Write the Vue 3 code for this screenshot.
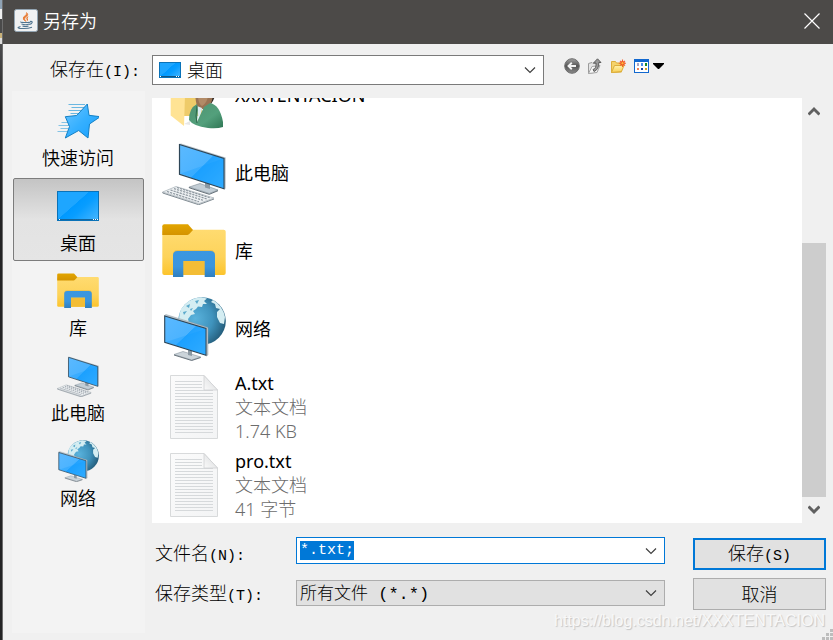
<script setup>
import { ref, onMounted } from 'vue'

const places = [
  { id: 'quick', label: '快速访问', icon: 'star' },
  { id: 'desktop', label: '桌面', icon: 'desktop' },
  { id: 'library', label: '库', icon: 'library' },
  { id: 'pc', label: '此电脑', icon: 'pc' },
  { id: 'network', label: '网络', icon: 'network' },
]
const activePlace = ref('desktop')

const entries = [
  { name: 'XXXTENTACION', icon: 'user' },
  { name: '此电脑', icon: 'pc' },
  { name: '库', icon: 'library' },
  { name: '网络', icon: 'network' },
  { name: 'A.txt', icon: 'doc', kind: '文本文档', size: '1.74 KB' },
  { name: 'pro.txt', icon: 'doc', kind: '文本文档', size: '41 字节' },
]

const docLines = [6, 9, 12, 15, 18, 21, 24, 27, 30, 33, 36, 39, 42, 45, 48, 51, 54, 57]

const fileName = ref('*.txt;')
const nameInput = ref(null)
const listEl = ref(null)

onMounted(() => {
  listEl.value.scrollTop = 42
  nameInput.value.focus()
  nameInput.value.select()
})
</script>

<template>
  <div class="screen">
    <svg class="defs" width="0" height="0" aria-hidden="true">
      <defs>
        <linearGradient id="gScreen" x1="0" y1="0" x2="1" y2="1">
          <stop offset="0" stop-color="#5bb9ff" /><stop offset="0.5" stop-color="#4bb3ff" />
          <stop offset="0.51" stop-color="#22a3ff" /><stop offset="1" stop-color="#3fb2ff" />
        </linearGradient>
        <linearGradient id="gDesk" x1="0" y1="0.1" x2="1" y2="0.9">
          <stop offset="0" stop-color="#1ea6ff" /><stop offset="0.42" stop-color="#1ea6ff" />
          <stop offset="0.43" stop-color="#0099ff" /><stop offset="0.6" stop-color="#089dff" /><stop offset="1" stop-color="#41b4ff" />
        </linearGradient>
        <linearGradient id="gFolder" x1="0" y1="0" x2="0" y2="1">
          <stop offset="0" stop-color="#ffdb70" /><stop offset="0.6" stop-color="#fdd35a" /><stop offset="1" stop-color="#fcc42c" />
        </linearGradient>
        <linearGradient id="gTab" x1="0" y1="0" x2="0" y2="1">
          <stop offset="0" stop-color="#e2a500" /><stop offset="1" stop-color="#d49300" />
        </linearGradient>
        <linearGradient id="gClip" x1="0" y1="0" x2="0" y2="1">
          <stop offset="0" stop-color="#3b97e0" /><stop offset="0.6" stop-color="#3a95de" /><stop offset="1" stop-color="#307fbe" />
        </linearGradient>
        <radialGradient id="gGlobe" cx="0.36" cy="0.45" r="0.66">
          <stop offset="0" stop-color="#5ab3dd" /><stop offset="0.55" stop-color="#3f93bd" /><stop offset="1" stop-color="#235b79" />
        </radialGradient>
        <linearGradient id="gStar" x1="0" y1="0" x2="1" y2="1">
          <stop offset="0" stop-color="#6cc5ff" /><stop offset="0.5" stop-color="#36b0ff" /><stop offset="1" stop-color="#159fff" />
        </linearGradient>
        <linearGradient id="gPaper" x1="0" y1="0" x2="1" y2="1">
          <stop offset="0" stop-color="#fbfbfb" /><stop offset="1" stop-color="#f3f4f5" />
        </linearGradient>
        <linearGradient id="gFold" x1="0" y1="1" x2="1" y2="0">
          <stop offset="0" stop-color="#fafafa" /><stop offset="1" stop-color="#d6d8da" />
        </linearGradient>
        <linearGradient id="gCoat" x1="0" y1="0" x2="1" y2="1">
          <stop offset="0" stop-color="#4f9270" /><stop offset="0.6" stop-color="#53a07c" /><stop offset="1" stop-color="#2f7654" />
        </linearGradient>
        <linearGradient id="gBall" x1="0" y1="0" x2="0" y2="1">
          <stop offset="0" stop-color="#a2a2a2" /><stop offset="0.5" stop-color="#555" /><stop offset="1" stop-color="#8b8b8b" />
        </linearGradient>
        <linearGradient id="gOpen" x1="0" y1="0" x2="0" y2="1">
          <stop offset="0" stop-color="#fff3ae" /><stop offset="1" stop-color="#f8ce52" />
        </linearGradient>
      </defs>

      <symbol id="i-star" viewBox="0 0 42 42">
        <g stroke="#3da4dc" stroke-width="1">
          <path d="M11.500 4.500H28M14.500 7.500H27M11.500 10.500H25M13.500 13.500H23" opacity=".75" />
          <path d="M4.500 22.500H11M1.500 25.500H12M3.500 28.500H11M0.500 31.500H10" opacity=".6" />
        </g>
        <path d="M30.300 4 32 15.300 43.300 16.700 32.500 24 31 38 21.700 30.500 8.300 38 12.500 26.500 8.300 16.700 19.700 15.500Z"
          fill="url(#gStar)" stroke="#1480c4" stroke-width="1" stroke-linejoin="round" />
      </symbol>

      <symbol id="i-desktop" viewBox="0 0 42 42">
        <rect x="0.5" y="6.500" width="41" height="29" fill="url(#gDesk)" stroke="#0a72b8" />
        <path d="M1 34.500H41" stroke="#14659c" />
        <path d="M2 34.500H3M36 34.500H37M38 34.500H39M40 34.500H41" stroke="#fff" />
      </symbol>

      <symbol id="i-library" viewBox="0 -1 64 64">
        <rect x="0.300" y="9.800" width="63.400" height="45.200" rx="2" fill="url(#gFolder)" />
        <path d="M.3 15V6.300Q.3 4.300 2.300 4.300H26L31 10 27 14.200 25.500 15Z" fill="url(#gTab)" />
        <path d="M11 57V35.500Q11 31 15.500 31H48.500Q53 31 53 35.500V57H42.700V41H21.300V57Z" fill="#a07000" opacity=".2" transform="translate(0 -1)" />
        <rect x="21.300" y="41" width="21.400" height="14" fill="#f3bd35" />
        <path d="M11 57V35.500Q11 31 15.500 31H48.500Q53 31 53 35.500V57H42.700V41H21.300V57Z" fill="url(#gClip)" />
      </symbol>

      <symbol id="i-pc" viewBox="0 -1 64 64">
        <path d="M27.300 45 38 41.500 56 48 47.300 51.500Z" fill="#c3ced6" stroke="#7b8993" stroke-width=".6" />
        <path d="M27.300 45V45.800L47.300 52.300 56 48.700" fill="none" stroke="#53616b" stroke-width=".9" />
        <path d="M43 40 48 41.500V47L43 45.500Z" fill="#8b99a3" />
        <path d="M17.300 2 19 1.500 63.700 15.500V46.500L62 47.500Z" fill="#b9c3ca" />
        <path d="M17.500 2.500 62 16.500V46.700L17.500 32.300Z" fill="url(#gScreen)" stroke="#2e4657" stroke-width="1.200" />
        <path d="M61.500 16.500 19 31.500 61.500 46Z" fill="#0c9bff" opacity=".28" />
        <path d="M.7 50 14 44.500 52 56 36.700 61.700Z" fill="#eef1f3" stroke="#a4adb4" stroke-width=".7" />
        <path d="M.7 50.300V51L36.700 62.700 52 57" fill="none" stroke="#7f8a92" stroke-width="1" />
        <g fill="none" stroke="#8d979f" stroke-width="1.200" stroke-dasharray="2.200 1">
          <path d="M5 49.500 37 59.800M8.500 48 41 58.300M12 46.600 45 57M15 45.500 48 55.800" />
        </g>
      </symbol>

      <symbol id="i-network" viewBox="0 0 64 64">
        <circle cx="40" cy="24" r="23.800" fill="url(#gGlobe)" />
        <g fill="#d4edf2">
          <path d="M19 12Q27 1 39 .3L45 1.500 42 4 45 7 41 7 40 10 36 9.500 34 12 31 14 33 17 29 18 26 22 27 26 24 24 21 25 17 22Q17 17 19 12Z" />
          <path d="M51 3Q61 9 63 20L62 27 58 26 55 20 55 15 58 12 54 11 53 7 49 5Z" />
          <path d="M20 25 27 26 30 30 28 35 20 31Z" opacity=".7" />
        </g>
        <g fill="#5aa9cb"><path d="M24 9 28 7 27 11ZM21 15 25 14 22 18ZM33 4 37 3 35 7ZM28 12 31 11 29 14Z" /></g>
        <path d="M12 57.500 21 54.500 38.700 60 29.700 63Z" fill="#cbd4da" stroke="#8a969f" stroke-width=".6" />
        <path d="M12 58 29.700 63.500 38.700 60.500" fill="none" stroke="#5d6a73" stroke-width=".9" />
        <path d="M26 53 30 54V59L26 58Z" fill="#8b99a3" />
        <path d="M2.300 18.500 4 17.500 46 30.500V58L44.500 59Z" fill="#bcc6cd" stroke="#89959d" stroke-width=".4" />
        <path d="M2.700 19 44 31.500V58.300L2.700 45.300Z" fill="url(#gScreen)" stroke="#2e4657" stroke-width="1.100" />
        <path d="M43.500 32 4 45 43.500 57.500Z" fill="#0c9bff" opacity=".28" />
      </symbol>

      <symbol id="i-user" viewBox="0 0 64 72">
        <path d="M20 0H40V54H20Z" fill="#eecb69" />
        <path d="M8.700 0H24L22 64 8.700 53.500Z" fill="#ffe394" />
        <path d="M22 62 28 59V63Z" fill="#e7e7e7" />
        <path d="M48 20H55Q54 36 49 42Z" fill="#2e2825" />
        <path d="M33 25H51Q52 40 45 48L36 46Q33 41 33 25Z" fill="#9a7353" />
        <path d="M36 25H47Q47 40 40 44 35 42 36 25Z" fill="#b28b67" />
        <path d="M35 44 40 46 37 60Z" fill="#dcecf2" />
        <path d="M27 58Q27 46 35 42L36 48 35 60 42 45 48 41Q58 43 61 60V65Q55 67 46 66 31 64 27 58Z" fill="url(#gCoat)" />
        <path d="M35 44 34 54 35 61" fill="none" stroke="#2d684b" stroke-width="1" />
      </symbol>

      <symbol id="i-doc" viewBox="0 0 64 64">
        <path d="M8.500 .5H42L55.500 15V63.500H8.500Z" fill="url(#gPaper)" stroke="#d8dadb" />
        <path v-for="y in docLines" :key="y" :d="`M13 ${y + 0.5}H${y < 15 ? 40 : 51}`" stroke="#d6d9db" />
        <path d="M42 .5V15H55.500Z" fill="url(#gFold)" stroke="#cfd1d3" stroke-width=".8" />
      </symbol>

      <symbol id="i-chevron" viewBox="0 0 12 8">
        <path d="M1 1.500 6 6.500 11 1.500" fill="none" stroke="#404040" stroke-width="1.200" />
      </symbol>
    </svg>

    <div class="backdrop"></div>

    <main class="dialog">
      <header class="titlebar">
        <svg class="app-icon" viewBox="0 0 24 24" aria-hidden="true">
          <rect x="0.500" y="0.500" width="23" height="22" rx="2" fill="#f0f1f2" stroke="#93a5b3" />
          <path d="M12.500 3.500Q15.500 6 11.500 8 9.500 10 12 12.500 8 10.500 9.500 8 13.500 5.500 12.500 3.500Z" fill="#e8762c" stroke="#e8762c" stroke-width=".6" />
          <path d="M14.500 7Q11.500 8.500 12.500 10 13.500 11.500 12.500 12.500 15 11 13.500 9.500Z" fill="#e8762c" />
          <path d="M7 12.800Q6 13.500 11.500 13.500T16 12.800M7.500 15Q11.500 16.500 15.500 15M8.500 17Q11.500 18 14.500 17M16 12.500Q19.500 12 17.500 14.500L15.500 15.500M6.500 17.500Q2 18.500 6 19.300 13 20 18 18.300" fill="none" stroke="#51758f" stroke-width="1.200" />
        </svg>
        <h1 class="title">另存为</h1>
        <button class="close" type="button" aria-label="关闭">
          <svg width="16" height="16" viewBox="0 0 16 16"><path d="M.5 .5 15.500 15.500M15.500 .5 .5 15.500" stroke="#fff" stroke-width="1.200" /></svg>
        </button>
      </header>

      <div class="body">
        <div class="side">
          <label class="song look-label" for="lookin">保存在<span class="mono">(I):</span></label>
          <nav class="places">
            <button
              v-for="p in places"
              :key="p.id"
              type="button"
              class="place"
              :class="{ active: p.id === activePlace }"
              @click="activePlace = p.id"
            >
              <svg class="place-icon" aria-hidden="true"><use :href="'#i-' + p.icon" /></svg>
              <span>{{ p.label }}</span>
            </button>
          </nav>
        </div>

        <div class="main">
          <div class="look-row">
            <div class="combo look">
              <svg class="combo-icon" width="22" height="16" viewBox="0 0 22 16" aria-hidden="true">
                <rect x="0.500" y="0.500" width="21" height="15" fill="url(#gDesk)" stroke="#0a72b8" />
                <path d="M1 14.500H21" stroke="#14557f" /><path d="M1 14.500H2M17 14.500H18M19 14.500H20" stroke="#fff" />
              </svg>
              <select id="lookin" class="song"><option>桌面</option></select>
              <svg class="chev" aria-hidden="true"><use href="#i-chevron" /></svg>
            </div>
            <div class="tools">
              <button type="button" aria-label="后退">
                <svg width="16" height="16" viewBox="0 0 16 16">
                  <circle cx="8" cy="8" r="7.300" fill="url(#gBall)" stroke="#6e6e6e" />
                  <path d="M12 8H5M7.800 4.800 4.500 8 7.800 11.200" fill="none" stroke="#f4f4f4" stroke-width="1.900" />
                </svg>
              </button>
              <button type="button" aria-label="上一级">
                <svg width="16" height="16" viewBox="0 0 16 16">
                  <path d="M1.500 5.500 5 4.500 6 5.500 10 5V14L1.500 15.500Z" fill="#e4e4e4" stroke="#9b9b9b" />
                  <path d="M1.500 15.500 5 8.500 13 7.500 10 14.500Z" fill="#f7f7f7" stroke="#a6a6a6" />
                  <path d="M6 11.500Q9.500 10.500 9 5H6.500L10.500 .8 14 4.500H11.800Q12 11.500 7 13.500Z" fill="#999" stroke="#555" stroke-width=".9" />
                </svg>
              </button>
              <button type="button" aria-label="新建文件夹">
                <svg width="16" height="16" viewBox="0 0 16 16">
                  <path d="M1.500 14.500V3.500H5.500L6.500 5H11.500V14Z" fill="#f5d36b" stroke="#dcae3c" />
                  <path d="M1.500 14.500 4.500 7.500H14L11.500 13.500Z" fill="url(#gOpen)" stroke="#dcae3c" />
                  <path d="M12.500 1.500V9M8.800 5.200H16M10 2.800 15 7.700M15 2.800 10 7.700" stroke="#f4622e" stroke-width="1.100" />
                  <circle cx="12.500" cy="5.200" r="1.700" fill="#ffb43b" stroke="#ee4d20" />
                </svg>
              </button>
              <button type="button" aria-label="查看菜单">
                <svg width="32" height="16" viewBox="0 0 32 16">
                  <rect x="1.500" y="2" width="14" height="12.500" fill="#fff" stroke="#1268cf" />
                  <rect x="1" y="1" width="15" height="3" fill="#1268cf" />
                  <g><rect x="4" y="5" width="2" height="3" fill="#a9a5c6" /><rect x="8" y="5" width="2" height="3" fill="#4b8eea" /><rect x="12" y="5" width="2" height="3" fill="#158a28" />
                  <rect x="4" y="10" width="2" height="2" fill="#ef8057" /><rect x="8" y="10" width="2" height="2" fill="#17419c" /><rect x="12" y="10" width="2" height="2" fill="#d6a21b" /></g>
                  <path d="M20 5H31V6L26 11H25L20 6Z" fill="#000" />
                </svg>
              </button>
            </div>
          </div>

          <div class="browser">
            <ul ref="listEl" class="files">
              <li v-for="f in entries" :key="f.name" class="file">
                <svg class="file-icon" :class="f.icon" aria-hidden="true"><use :href="'#i-' + f.icon" /></svg>
                <div class="meta">
                  <div>{{ f.name }}</div>
                  <div v-if="f.kind" class="dim">{{ f.kind }}</div>
                  <div v-if="f.size" class="dim">{{ f.size }}</div>
                </div>
              </li>
            </ul>
            <div class="scrollbar">
              <button type="button" aria-label="向上滚动">
                <svg width="12" height="10" viewBox="0 0 12 10"><path d="M.5 8.500 6 3 11.500 8.500" fill="none" stroke="#606060" stroke-width="3" /></svg>
              </button>
              <div class="track"><div class="thumb"></div></div>
              <button type="button" aria-label="向下滚动">
                <svg width="12" height="10" viewBox="0 0 12 10"><path d="M.5 1.500 6 7 11.500 1.500" fill="none" stroke="#606060" stroke-width="3" /></svg>
              </button>
            </div>
          </div>

          <form class="form" @submit.prevent>
            <div class="labels song">
              <label for="fname">文件名<span class="mono">(N):</span></label>
              <label for="ftype">保存类型<span class="mono">(T):</span></label>
            </div>
            <div class="fields">
              <div class="combo name">
                <input id="fname" ref="nameInput" v-model="fileName" type="text" autocomplete="off" spellcheck="false" />
                <svg class="chev" aria-hidden="true"><use href="#i-chevron" /></svg>
              </div>
              <div class="combo type">
                <select id="ftype"><option>所有文件 (*.*)</option></select>
                <svg class="chev" aria-hidden="true"><use href="#i-chevron" /></svg>
              </div>
            </div>
            <div class="actions">
              <button type="submit" class="btn primary song">保存<span class="mono">(S)</span></button>
              <button type="button" class="btn song">取消</button>
            </div>
          </form>
        </div>
      </div>

      <div class="watermark">https://blog.csdn.net/XXXTENTACION</div>
      <svg class="grip" width="11" height="11" viewBox="0 0 11 11" aria-hidden="true">
        <path d="M8 0h3v3H8zM4 4h3v3H4zM8 4h3v3H8zM0 8h3v3H0zM4 8h3v3H4zM8 8h3v3H8z" fill="#bdbdbd" />
      </svg>
    </main>
  </div>
</template>

<style>
body {
  margin: 0;
}
</style>

<style scoped>
.screen {
  display: flex;
  min-height: 100vh;
  font-family: 'Noto Sans', 'Noto Sans CJK SC', sans-serif;
  font-size: 18px;
  line-height: 24px;
  color: #000;
}
.screen * {
  box-sizing: border-box;
}
.defs {
  position: absolute;
}
button,
input,
select {
  margin: 0;
  padding: 0;
  border: 0;
  background: none;
  font: inherit;
  color: inherit;
  appearance: none;
  outline: none;
  border-radius: 0;
}
.backdrop {
  width: 3px;
  border-right: 1px solid #6d6d6d;
  background: linear-gradient(#8fa3b5 0 9px, #f0f0f0 9px 19px, #4a4a4a 19px 33px, #c9b27a 33px 38px, #ddd 38px 44px, #4c4c4e 44px, #232324 110px);
}
.dialog {
  position: relative;
  flex: 1;
  min-width: 0;
  display: flex;
  flex-direction: column;
  background: #f0f0f0;
}
.titlebar {
  display: flex;
  align-items: center;
  height: 44px;
  padding: 0 13px 2px 11px;
  background: #4c4a48;
  color: #fff;
}
.app-icon {
  width: 24px;
  height: 24px;
  margin-right: 5px;
}
.title {
  flex: 1;
  margin: 0;
  font-size: 18px;
  font-weight: 350;
}
.close {
  display: flex;
}
.body {
  flex: 1;
  min-height: 0;
  display: flex;
  gap: 7px;
  padding: 11px 7px 7px 9px;
}
.side {
  flex: none;
  width: 133px;
  display: flex;
  flex-direction: column;
  gap: 6px;
}
.song {
  font-family: 'Noto Sans CJK SC', sans-serif;
  font-size: 18px;
  font-weight: 300;
}
.mono {
  font-family: 'Liberation Mono', monospace;
  font-size: 15px;
}
.look-label {
  height: 30px;
  line-height: 26px;
  padding-right: 5px;
  text-align: right;
}
.places {
  flex: 1;
  display: flex;
  flex-direction: column;
  gap: 2px;
  padding: 2px 1px;
  background: #f3f3f3;
}
.place {
  display: flex;
  flex-direction: column;
  align-items: center;
  gap: 4px;
  height: 83px;
  padding: 6px 1px 0 0;
  border: 1px solid transparent;
  font-weight: 350;
}
.place.active {
  border-color: #7c7c7c;
  border-radius: 2px;
  background: linear-gradient(#c4c4c4, #e3e3e3 50%, #e5e5e5);
}
.place-icon {
  width: 42px;
  height: 42px;
  overflow: visible;
}
.main {
  flex: 1;
  min-width: 0;
  display: flex;
  flex-direction: column;
}
.look-row {
  display: flex;
  gap: 20px;
  margin-bottom: 13px;
}
.combo {
  position: relative;
  display: flex;
  align-items: center;
  border: 1px solid #7a7a7a;
  background: #fff;
}
.combo select,
.combo input {
  flex: 1;
  min-width: 0;
  width: 100%;
}
.combo .chev {
  position: absolute;
  right: 7px;
  width: 12px;
  height: 8px;
  pointer-events: none;
}
.look {
  flex: 0 1 392px;
  height: 30px;
  padding-left: 6px;
  gap: 6px;
}
.look select {
  height: 28px;
  padding-bottom: 3px;
}
.tools {
  display: flex;
  align-items: flex-start;
  gap: 7px;
  padding-top: 3px;
}
.tools button {
  display: flex;
}
.browser {
  flex: 1 1 0;
  min-height: 0;
  display: flex;
}
.files {
  flex: 1;
  min-width: 0;
  height: calc(100vh - 215px);
  margin: 0;
  padding: 0 10px;
  overflow: hidden;
  list-style: none;
  background: #fff;
}
.file {
  display: flex;
  align-items: center;
  gap: 9px;
  height: 78px;
}
.file-icon {
  flex: none;
  width: 64px;
  height: 64px;
}
.file-icon.user {
  height: 72px;
  align-self: flex-end;
}
.dim {
  color: #6c6c6c;
  font-weight: 300;
}
.scrollbar {
  width: 24px;
  display: flex;
  flex-direction: column;
}
.scrollbar button {
  display: flex;
  justify-content: center;
  align-items: center;
  height: 26px;
}
.track {
  flex: 1;
  display: flex;
  flex-direction: column;
  justify-content: flex-end;
}
.thumb {
  height: 68%;
  background: #cdcdcd;
}
.form {
  display: grid;
  grid-template-columns: 144px minmax(0, 1fr) 133px;
  margin: 14px 0 23px;
}
.labels,
.actions {
  display: flex;
  flex-direction: column;
  gap: 8px;
  padding-top: 1px;
}
.labels {
  padding-left: 3px;
}
.labels label {
  line-height: 28px;
  height: 32px;
}
.fields {
  display: flex;
  flex-direction: column;
  gap: 16px;
  margin-right: 28px;
}
.name {
  height: 27px;
  padding-left: 3px;
  border-color: #0078d7;
}
.name input {
  height: 19px;
  line-height: 19px;
  font-family: 'Liberation Mono', monospace;
  font-size: 15px;
  caret-color: transparent;
}
.name input::selection {
  background: #0078d7;
  color: #fff;
}
.type {
  height: 26px;
  padding-left: 3px;
  border-color: #adadad;
  background: #e1e1e1;
}
.type select {
  height: 24px;
  padding-top: 2px;
  font-family: 'Liberation Mono', 'Noto Sans CJK SC', monospace;
  font-size: 17px;
  font-weight: 300;
}
.btn {
  height: 32px;
  padding-bottom: 2px;
  border: 1px solid #adadad;
  background: #e1e1e1;
}
.btn.primary {
  border: 2px solid #0078d7;
}
.watermark {
  position: absolute;
  right: 8px;
  bottom: 7px;
  font-family: 'Liberation Sans', Arial, sans-serif;
  font-size: 16px;
  color: #f8f8f8;
  text-shadow: 1px 1px 1px #c4c4c4;
}
.grip {
  position: absolute;
  right: 0;
  bottom: 0;
}
</style>
